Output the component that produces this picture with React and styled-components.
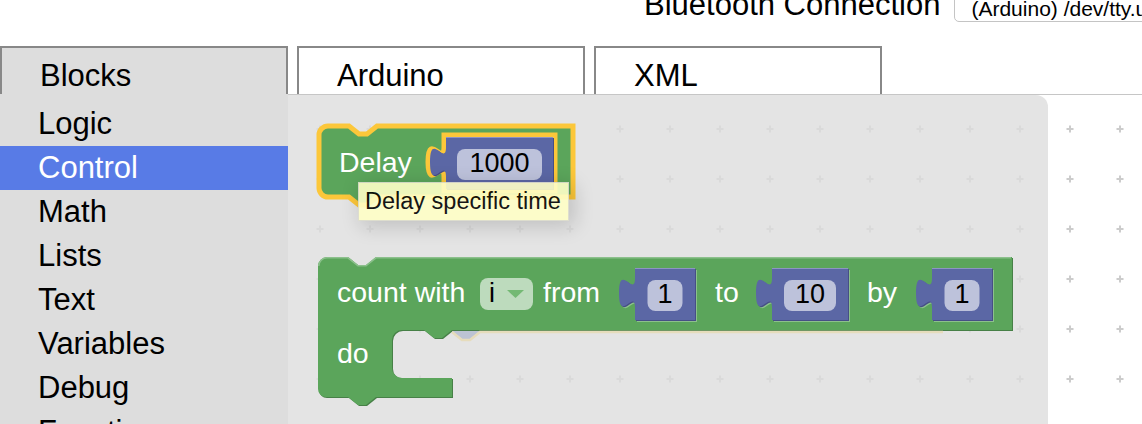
import React from "react";
import styled, { createGlobalStyle } from "styled-components";

const GlobalStyle = createGlobalStyle`
  html, body {
    margin: 0;
    padding: 0;
    overflow: hidden;
    background: #fff;
  }
  body {
    font-family: "Liberation Sans", Arial, sans-serif;
    color: #000;
  }
`;

const Page = styled.div`
  width: 1142px;
  height: 424px;
  overflow: hidden;
`;

const Header = styled.div`
  display: flex;
  align-items: flex-end;
  gap: 14px;
  height: 22px;
  padding-left: 644px;
`;

const HeaderLabel = styled.span`
  font-size: 31px;
  line-height: 31px;
  margin-bottom: 2px;
  white-space: nowrap;
`;

const PortSelect = styled.div`
  flex: none;
  background: #fff;
  border: 1px solid #c4c4c4;
  border-radius: 0 0 5px 5px;
  padding: 8px 16px 2px;
  font-size: 21px;
  line-height: 21px;
  white-space: nowrap;
`;

const TabRow = styled.div`
  display: flex;
  gap: 9px;
  margin-top: 24px;
  height: 48px;
`;

const Tab = styled.div`
  box-sizing: border-box;
  flex: none;
  width: 288px;
  height: 48px;
  border: 2px solid #888;
  border-bottom: none;
  padding: 12px 0 0 38px;
  font-size: 31px;
  line-height: 31px;
  background: ${(p) => (p.$active ? "#ddd" : "#fff")};
`;

const Main = styled.div`
  display: flex;
  height: 330px;
`;

const Toolbox = styled.ul`
  list-style: none;
  margin: 0;
  padding: 8px 0 0;
  width: 288px;
  flex: none;
  background: #ddd;
  overflow: hidden;
`;

const Category = styled.li`
  height: 44px;
  line-height: 44px;
  padding-left: 38px;
  font-size: 31px;
  white-space: nowrap;
  background: ${(p) => (p.$selected ? "#587be6" : "transparent")};
  color: ${(p) => (p.$selected ? "#fff" : "#000")};
`;

const Workspace = styled.div`
  position: relative;
  flex: 1;
  border-top: 1px solid #c6c6c6;
  overflow: hidden;
`;

const Canvas = styled.svg`
  display: block;
  width: 100%;
  height: 100%;
`;

const BlockText = styled.text`
  font-family: "Liberation Sans", Arial, sans-serif;
  font-size: 28.5px;
  fill: #fff;
`;

const FieldText = styled.text`
  font-family: "Liberation Sans", Arial, sans-serif;
  font-size: 27px;
  fill: #000;
  text-anchor: ${(p) => (p.$start ? "start" : "middle")};
`;

const FieldRect = styled.rect`
  fill: ${(p) => (p.$tone === "green" ? "#bddbbd" : "#bdc2db")};
`;

const Tooltip = styled.div`
  position: absolute;
  left: 70px;
  top: 87px;
  padding: 5px 7px 6px 6px;
  font-size: 23.5px;
  line-height: 26px;
  white-space: nowrap;
  background: #ffffc7;
  border: 1px solid #ddc;
  opacity: 0.9;
  box-shadow: 4px 4px 20px 1px rgba(0, 0, 0, 0.18);
`;

const categories = ["Logic", "Control", "Math", "Lists", "Text", "Variables", "Debug", "Functions"];
const tabs = ["Blocks", "Arduino", "XML"];

const TAB_UP = "c 0,-20 -16,16 -16,-15 s 16,5 16,-15";

const valuePath = (x, y, x2, y2) => `M${x},${y} H${x2} V${y2} H${x} V${y + 40} ${TAB_UP} Z`;

const ValueBlock = ({ x, y, w, fieldW, value, socket = true }) => {
  const x2 = x + w;
  const d = valuePath(x, y, x2, y + 52);
  const fx = x + (w - fieldW) / 2;
  return (
    <g>
      {socket && <path d={d} transform="translate(2 2)" fill="#8cc08c" />}
      <path d={d} transform="translate(1 1)" fill="#464f85" />
      <path d={d} fill="#5b67a5" />
      <path d={`M${x},${y + 0.5} H${x2}`} stroke="#8d95c3" strokeWidth="1" />
      <FieldRect x={fx} y={y + 12} width={fieldW} height={31} rx={8} />
      <FieldText x={fx + fieldW / 2} y={y + 35}>
        {value}
      </FieldText>
    </g>
  );
};

// loop block, page coordinates
const countPath =
  "M318,266 A9,9 0 0 1 327,257 H348 l10,8 8,0 10,-8 H1012 V330 H452 l-10,8 -8,0 -10,-8 H402 " +
  "A10,10 0 0 0 392,340 V368 A10,10 0 0 0 402,378 H452 V397 H376 l-10,8 -8,0 -10,-8 H326 " +
  "A8,8 0 0 1 318,389 Z";

const delayPath =
  "M319,135 A9,9 0 0 1 328,126 H349 l10,8 8,0 10,-8 H573 V197 H377 l-10,8 -8,0 -10,-8 H328 " +
  "A9,9 0 0 1 319,188 Z " +
  `M444,135 H555 V191 H444 V177 ${TAB_UP} V135 Z`;

const BlockCanvas = () => (
  <Canvas>
    <defs>
      <pattern id="grid" x="0" y="4" width="50" height="50" patternUnits="userSpaceOnUse">
        <path d="M16.5,25 h7 M20,21.5 v7" stroke="#ccc" strokeWidth="2" />
      </pattern>
    </defs>
    <g transform="translate(-288 -95)">
      <rect x="288" y="95" width="854" height="340" fill="url(#grid)" />
      <path d="M288,95 H1036 A12,12 0 0 1 1048,107 V440 H288 Z" fill="#ddd" opacity="0.8" />

      {/* count with */}
      <g>
        <path d={countPath} transform="translate(1 1)" fill="#478047" />
        <path d={countPath} fill="#5ba55b" />
        <path
          d="M318.8,266 A8.2,8.2 0 0 1 327,257.8 H348 l10,8 8,0 10,-8 H1011"
          stroke="#8cc08c"
          strokeWidth="1.5"
          fill="none"
        />
        <path d="M452,331 l10,8 8,0 10,-8 Z" fill="#bcc3d4" />
        <path d="M452,332 l10,8 8,0 10,-8 H943" stroke="#e6dcbc" strokeWidth="2.5" fill="none" />
        <BlockText x="337" y="302">count with</BlockText>
        <FieldRect x="480" y="278" width="53" height="32" rx="8" $tone="green" />
        <FieldText x="489" y="302" $start>
          i
        </FieldText>
        <path d="M507,290 H524 L515.5,298 Z" fill="#74b974" />
        <BlockText x="543" y="302">from</BlockText>
        <ValueBlock x={635} y={268} w={60} fieldW={35} value="1" />
        <BlockText x="715" y="302">to</BlockText>
        <ValueBlock x={772} y={268} w={76} fieldW={52} value="10" />
        <BlockText x="867" y="302">by</BlockText>
        <ValueBlock x={932} y={268} w={60} fieldW={35} value="1" />
        <BlockText x="337" y="363">do</BlockText>
      </g>

      {/* delay, selected */}
      <g>
        <path d={delayPath} fill="#5ba55b" fillRule="evenodd" stroke="#fcc73a" strokeWidth="5" />
        <BlockText x="339" y="172">Delay</BlockText>
        <ValueBlock x={446} y={137} w={107} fieldW={85} value="1000" socket={false} />
      </g>
    </g>
  </Canvas>
);

export default function App() {
  return (
    <Page>
      <GlobalStyle />
      <Header>
        <HeaderLabel>Bluetooth Connection</HeaderLabel>
        <PortSelect>(Arduino) /dev/tty.usbmodem1411</PortSelect>
      </Header>
      <TabRow>
        {tabs.map((t, i) => (
          <Tab key={t} $active={i === 0}>
            {t}
          </Tab>
        ))}
      </TabRow>
      <Main>
        <Toolbox>
          {categories.map((c) => (
            <Category key={c} $selected={c === "Control"}>
              {c}
            </Category>
          ))}
        </Toolbox>
        <Workspace>
          <BlockCanvas />
          <Tooltip>Delay specific time</Tooltip>
        </Workspace>
      </Main>
    </Page>
  );
}
